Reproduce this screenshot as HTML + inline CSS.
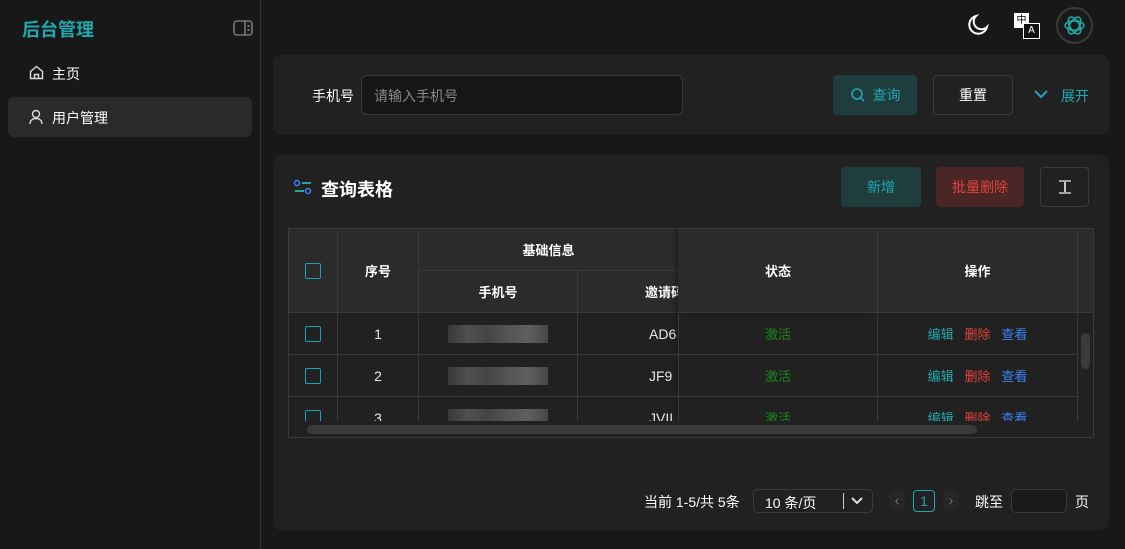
<!DOCTYPE html>
<html><head><meta charset="utf-8"><style>
*{box-sizing:border-box;margin:0;padding:0}
body{width:1125px;height:549px;background:#181818;font-family:"Liberation Sans","Noto Sans CJK SC",sans-serif;color:#e8e8e8;font-size:14px;position:relative;overflow:hidden}
.abs{position:absolute}
.side{left:0;top:0;width:261px;height:549px;border-right:1px solid #333}
.card{background:#212121;border-radius:8px}
.btn{position:absolute;border-radius:4px;display:flex;align-items:center;justify-content:center;font-size:14px}
.cell{position:absolute;display:flex;align-items:center;justify-content:center;border-right:1px solid #3a3a3a;border-bottom:1px solid #3a3a3a}
.hd{background:#2b2b2b;font-weight:bold;color:#fff;font-size:13px}
.cb{width:16px;height:16px;border:1.5px solid #19a5ad;border-radius:2px}
.blur{width:100px;height:18px;background:linear-gradient(90deg,#3b3b3d,#555,#4a4848,#5a5a5a,#666,#4b4b4b);opacity:.9}
</style></head><body>
<div class="abs side"></div>
<div class="abs" style="left:22px;top:16px;font-size:18px;font-weight:bold;color:#1fa8b0">后台管理</div>
<svg class="abs" style="left:233px;top:20px" width="20" height="16" viewBox="0 0 20 16"><rect x="1" y="1" width="18" height="14" rx="3" fill="none" stroke="#777" stroke-width="1.6"/><line x1="12" y1="1" x2="12" y2="15" stroke="#777" stroke-width="1.6"/><rect x="14.5" y="5" width="2" height="2" fill="#777"/><rect x="14.5" y="9" width="2" height="2" fill="#777"/></svg>
<svg class="abs" style="left:29px;top:65px" width="15" height="15" viewBox="0 0 15 15"><path d="M1.5 6.5L7.5 1.5L13.5 6.5V13.5H1.5Z M5.5 13.5V9.5H9.5V13.5" fill="none" stroke="#ddd" stroke-width="1.4"/></svg>
<div class="abs" style="left:52px;top:64px;color:#fff">主页</div>
<div class="abs" style="left:8px;top:97px;width:244px;height:40px;background:#2a2a2a;border-radius:6px"></div>
<svg class="abs" style="left:29px;top:109px" width="14" height="16" viewBox="0 0 14 16"><circle cx="7" cy="5" r="3.5" fill="none" stroke="#ddd" stroke-width="1.4"/><path d="M1 15C1 11 4 9.5 7 9.5S13 11 13 15" fill="none" stroke="#ddd" stroke-width="1.4"/></svg>
<div class="abs" style="left:52px;top:108px;color:#fff">用户管理</div>

<svg class="abs" style="left:967px;top:14px" width="22" height="22" viewBox="0 0 22 22"><path d="M9 2A9 9 0 1 0 20 13A7 7 0 0 1 9 2Z" fill="none" stroke="#fff" stroke-width="2"/></svg>
<div class="abs" style="left:1014px;top:13px;width:15px;height:15px;background:#fff;color:#000;font-size:10px;text-align:center;line-height:15px">中</div>
<div class="abs" style="left:1023px;top:23px;width:17px;height:16px;background:#111;border:1.5px solid #fff;color:#fff;font-size:10px;text-align:center;line-height:13px">A</div>
<div class="abs" style="left:1056px;top:7px;width:37px;height:37px;border-radius:50%;border:2px solid #3a3a3a;background:#1a1a1a"></div>
<svg class="abs" style="left:1062px;top:13px" width="25" height="25" viewBox="0 0 24 24" fill="none" stroke="#1fa8a0" stroke-width="1.5"><ellipse cx="12" cy="12" rx="9" ry="4.5"/><ellipse cx="12" cy="12" rx="9" ry="4.5" transform="rotate(60 12 12)"/><ellipse cx="12" cy="12" rx="9" ry="4.5" transform="rotate(120 12 12)"/></svg>

<div class="abs card" style="left:273px;top:55px;width:836px;height:80px"></div>
<div class="abs" style="left:312px;top:86px;color:#fff">手机号</div>
<div class="abs" style="left:361px;top:75px;width:322px;height:40px;border:1px solid #3a3a3a;border-radius:6px;background:#161616;color:#888;padding:10px 12px">请输入手机号</div>
<div class="btn" style="left:833px;top:75px;width:84px;height:40px;background:#1f3d3d;color:#1fa8b0"><svg width="16" height="16" viewBox="0 0 16 16" style="margin-right:7px"><circle cx="7" cy="7" r="5" fill="none" stroke="#1fa8b0" stroke-width="1.6"/><line x1="11" y1="11" x2="14" y2="14" stroke="#1fa8b0" stroke-width="1.6"/></svg>查询</div>
<div class="btn" style="left:933px;top:75px;width:80px;height:40px;border:1px solid #3a3a3a;color:#fff">重置</div>
<svg class="abs" style="left:1034px;top:89px" width="14" height="10" viewBox="0 0 14 10"><path d="M1 2L7 8L13 2" fill="none" stroke="#1fa8b0" stroke-width="2"/></svg>
<div class="abs" style="left:1061px;top:86px;color:#1fa8b0">展开</div>

<div class="abs card" style="left:273px;top:155px;width:836px;height:375px"></div>
<svg class="abs" style="left:293px;top:179px" width="20" height="16" viewBox="0 0 20 16"><circle cx="4" cy="4" r="2.5" fill="none" stroke="#3b82f6" stroke-width="1.5"/><line x1="9" y1="4" x2="18" y2="4" stroke="#1fa8a0" stroke-width="2"/><line x1="2" y1="12" x2="11" y2="12" stroke="#1fa8a0" stroke-width="2"/><circle cx="15" cy="12" r="2.5" fill="none" stroke="#3b82f6" stroke-width="1.5"/></svg>
<div class="abs" style="left:321px;top:176px;font-size:18px;font-weight:bold;color:#fff">查询表格</div>
<div class="btn" style="left:841px;top:167px;width:80px;height:40px;background:#1f3d3d;color:#1fa8b0">新增</div>
<div class="btn" style="left:936px;top:167px;width:88px;height:40px;background:#4a2626;color:#e5413d">批量删除</div>
<div class="btn" style="left:1040px;top:167px;width:49px;height:40px;border:1px solid #3a3a3a"><svg width="14" height="16" viewBox="0 0 14 16"><line x1="1" y1="2" x2="13" y2="2" stroke="#ccc" stroke-width="1.5"/><line x1="1" y1="14" x2="13" y2="14" stroke="#ccc" stroke-width="1.5"/><line x1="7" y1="3" x2="7" y2="13" stroke="#fff" stroke-width="1.5"/></svg></div>

<div class="abs" style="left:288px;top:228px;width:806px;height:210px;border:1px solid #3a3a3a;overflow:hidden;background:#212121">
 <div class="cell hd" style="left:0;top:0;width:49px;height:84px"><div class="cb"></div></div>
 <div class="cell hd" style="left:49px;top:0;width:81px;height:84px">序号</div>
 <div class="cell hd" style="left:130px;top:0;width:260px;height:42px">基础信息</div>
 <div class="cell hd" style="left:130px;top:42px;width:159px;height:42px">手机号</div>
 <div class="cell hd" style="left:289px;top:42px;width:101px;height:42px;justify-content:flex-start;padding-left:67px;overflow:hidden;white-space:nowrap">邀请码</div>
 <div class="cell hd" style="left:390px;top:0;width:199px;height:84px;box-shadow:-3px 0 4px rgba(0,0,0,.35)">状态</div>
 <div class="cell hd" style="left:589px;top:0;width:200px;height:84px">操作</div>
 <div class="cell hd" style="left:789px;top:0;width:17px;height:84px;border-right:0"></div>
 <div class="abs" style="left:0;top:84px;width:789px">
  <div class="cell" style="left:0;top:0;width:49px;height:42px"><div class="cb"></div></div>
  <div class="cell" style="left:49px;top:0;width:81px;height:42px">1</div>
  <div class="cell" style="left:130px;top:0;width:159px;height:42px"><div class="blur"></div></div>
  <div class="cell" style="left:289px;top:0;width:101px;height:42px;justify-content:flex-start;padding-left:71px;overflow:hidden">AD6</div>
  <div class="cell" style="left:390px;top:0;width:199px;height:42px;color:#1a8a1a;font-size:13px">激活</div>
  <div class="cell" style="left:589px;top:0;width:200px;height:42px;font-size:13px"><span style="color:#1fa8b0">编辑</span>&nbsp;&nbsp;&nbsp;<span style="color:#e5413d">删除</span>&nbsp;&nbsp;&nbsp;<span style="color:#3b82f6">查看</span></div>
  <div class="cell" style="left:0;top:42px;width:49px;height:42px"><div class="cb"></div></div>
  <div class="cell" style="left:49px;top:42px;width:81px;height:42px">2</div>
  <div class="cell" style="left:130px;top:42px;width:159px;height:42px"><div class="blur"></div></div>
  <div class="cell" style="left:289px;top:42px;width:101px;height:42px;justify-content:flex-start;padding-left:71px;overflow:hidden">JF9</div>
  <div class="cell" style="left:390px;top:42px;width:199px;height:42px;color:#1a8a1a;font-size:13px">激活</div>
  <div class="cell" style="left:589px;top:42px;width:200px;height:42px;font-size:13px"><span style="color:#1fa8b0">编辑</span>&nbsp;&nbsp;&nbsp;<span style="color:#e5413d">删除</span>&nbsp;&nbsp;&nbsp;<span style="color:#3b82f6">查看</span></div>
  <div class="cell" style="left:0;top:84px;width:49px;height:42px"><div class="cb"></div></div>
  <div class="cell" style="left:49px;top:84px;width:81px;height:42px">3</div>
  <div class="cell" style="left:130px;top:84px;width:159px;height:42px"><div class="blur"></div></div>
  <div class="cell" style="left:289px;top:84px;width:101px;height:42px;justify-content:flex-start;padding-left:71px;overflow:hidden">JVII</div>
  <div class="cell" style="left:390px;top:84px;width:199px;height:42px;color:#1a8a1a;font-size:13px">激活</div>
  <div class="cell" style="left:589px;top:84px;width:200px;height:42px;font-size:13px"><span style="color:#1fa8b0">编辑</span>&nbsp;&nbsp;&nbsp;<span style="color:#e5413d">删除</span>&nbsp;&nbsp;&nbsp;<span style="color:#3b82f6">查看</span></div>
 </div>
 <div class="abs" style="left:389px;top:84px;width:1px;height:108px;box-shadow:-3px 0 4px rgba(0,0,0,.35)"></div>
 <div class="abs" style="left:0;top:192px;width:806px;height:18px;background:#212121"></div>
 <div class="abs" style="left:18px;top:196px;width:670px;height:9px;background:#3a3a3a;border-radius:5px"></div>
 <div class="abs" style="left:792px;top:104px;width:9px;height:36px;background:#3a3a3a;border-radius:5px"></div>
</div>

<div class="abs" style="left:644px;top:492px;color:#fff;font-size:14px">当前 1-5/共 5条</div>
<div class="abs" style="left:753px;top:489px;width:120px;height:24px;border:1px solid #3a3a3a;border-radius:5px;color:#fff;padding:3px 11px">10 条/页</div>
<div class="abs" style="left:843px;top:493px;width:1px;height:16px;background:#ccc"></div>
<svg class="abs" style="left:851px;top:497px" width="12" height="8" viewBox="0 0 12 8"><path d="M1 1L6 6L11 1" fill="none" stroke="#ddd" stroke-width="2"/></svg>
<div class="abs" style="left:889px;top:490px;width:16px;height:20px;background:#262626;border-radius:4px;color:#777;text-align:center;line-height:20px">‹</div>
<div class="abs" style="left:913px;top:490px;width:22px;height:22px;border:1px solid #1fa8b0;border-radius:4px;color:#1fa8b0;text-align:center;line-height:20px">1</div>
<div class="abs" style="left:943px;top:490px;width:16px;height:20px;background:#262626;border-radius:4px;color:#777;text-align:center;line-height:20px">›</div>
<div class="abs" style="left:975px;top:492px;color:#fff">跳至</div>
<div class="abs" style="left:1011px;top:489px;width:56px;height:24px;border:1px solid #3a3a3a;border-radius:5px;background:#1a1a1a"></div>
<div class="abs" style="left:1075px;top:492px;color:#fff">页</div>
</body></html>
